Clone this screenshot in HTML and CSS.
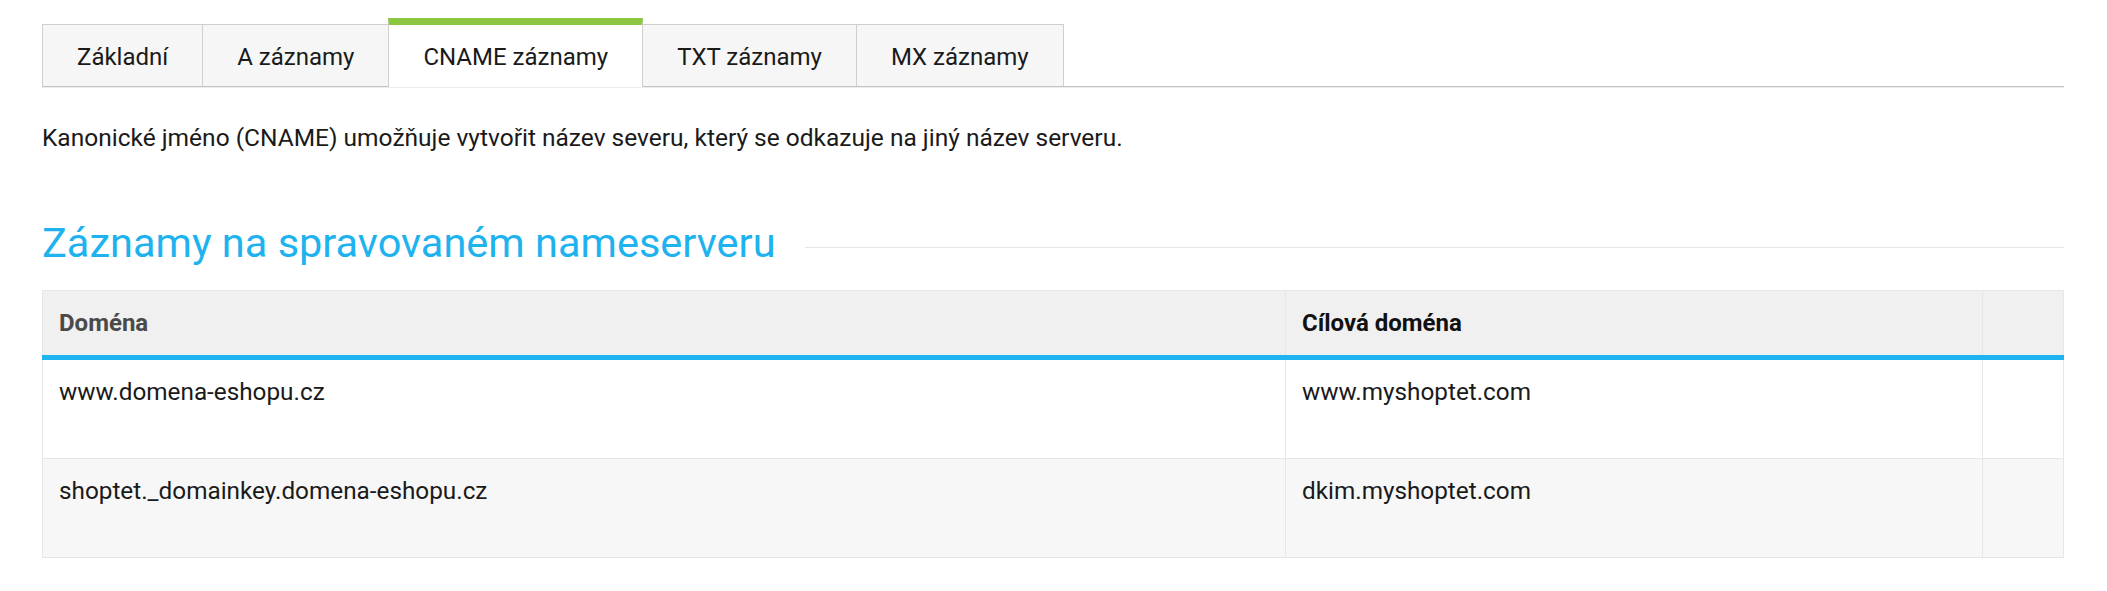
FILE: index.html
```html
<!DOCTYPE html>
<html lang="cs">
<head>
<meta charset="utf-8">
<title>DNS záznamy</title>
<link rel="stylesheet" href="styles.css">
</head>
<body>
<div class="page">
  <nav class="tabs">
    <a class="tab">Základní</a>
    <a class="tab">A záznamy</a>
    <a class="tab active">CNAME záznamy</a>
    <a class="tab">TXT záznamy</a>
    <a class="tab">MX záznamy</a>
  </nav>
  <p class="intro">Kanonické jméno (CNAME) umožňuje vytvořit název severu, který se odkazuje na jiný název serveru.</p>
  <h2 class="section-title"><span class="section-text">Záznamy na spravovaném nameserveru</span><span class="section-rule"></span></h2>
  <table class="records">
    <thead>
      <tr>
        <th class="col-domain muted">Doména</th>
        <th class="col-target">Cílová doména</th>
        <th class="col-actions"></th>
      </tr>
    </thead>
    <tbody>
      <tr>
        <td>www.domena-eshopu.cz</td>
        <td>www.myshoptet.com</td>
        <td></td>
      </tr>
      <tr class="alt">
        <td>shoptet._domainkey.domena-eshopu.cz</td>
        <td>dkim.myshoptet.com</td>
        <td></td>
      </tr>
    </tbody>
  </table>
</div>
</body>
</html>
```

FILE: styles.css
```css
html, body {
  margin: 0;
  padding: 0;
  background: #ffffff;
}

body {
  font-family: Roboto, "Noto Sans", "Liberation Sans", sans-serif;
  font-size: 24px;
  color: #1a1a1a;
}

.page {
  padding: 18px 43px 0 42px;
}

/* Tabs */
.tabs {
  display: flex;
  align-items: flex-end;
  border-bottom: 1px solid #c4c4c4;
  box-shadow: 0 1px 0 #ececec;
}

.tab {
  display: block;
  padding: 19px 34px 16px;
  line-height: 26px;
  background: #f6f6f6;
  border: 1px solid #cfcfcf;
  border-bottom: 0;
  border-left-width: 0;
  color: #1a1a1a;
  white-space: nowrap;
}

.tab:first-child {
  border-left-width: 1px;
}

.tab.active {
  background: #ffffff;
  border-top: 7px solid #8dc641;
  border-left-width: 1px;
  margin-left: -1px;
  margin-bottom: -1px;
  padding-bottom: 17px;
}

/* Intro */
.intro {
  margin: 36px 0 0;
  font-size: 24.5px;
  line-height: 30px;
  color: #1a1a1a;
}

/* Section title */
.section-title {
  display: flex;
  align-items: center;
  margin: 66px 0 0;
  font-size: 41.5px;
  font-weight: 400;
  line-height: 48px;
  color: #1eb2ee;
}

.section-text {
  white-space: nowrap;
}

.section-rule {
  flex: 1;
  height: 1px;
  background: #e6e6e6;
  margin: 8px 0 0 29px;
}

/* Table */
.records {
  width: 100%;
  margin-top: 23px;
  border-collapse: collapse;
  border: 1px solid #e6e6e6;
}

.records th,
.records td {
  text-align: left;
  vertical-align: top;
  border-left: 1px solid #e6e6e6;
  border-right: 1px solid #e6e6e6;
  line-height: 26px;
  padding: 0 16px;
}

.records th {
  background: #f0f0f0;
  font-weight: 700;
  color: #111111;
  height: 26px;
  padding-top: 19px;
  padding-bottom: 19px;
  border-bottom: 5px solid #1eb4ef;
}

.records th.muted {
  color: #4a4a4a;
}

.records td {
  height: 26px;
  font-size: 24.3px;
  padding-top: 19px;
  padding-bottom: 53px;
  border-bottom: 1px solid #e6e6e6;
  color: #1a1a1a;
}

.records tr.alt td {
  background: #f7f7f7;
}

.col-domain {
  width: auto;
}

.col-target {
  width: 664px;
}

.col-actions {
  width: 48px;
}
```
